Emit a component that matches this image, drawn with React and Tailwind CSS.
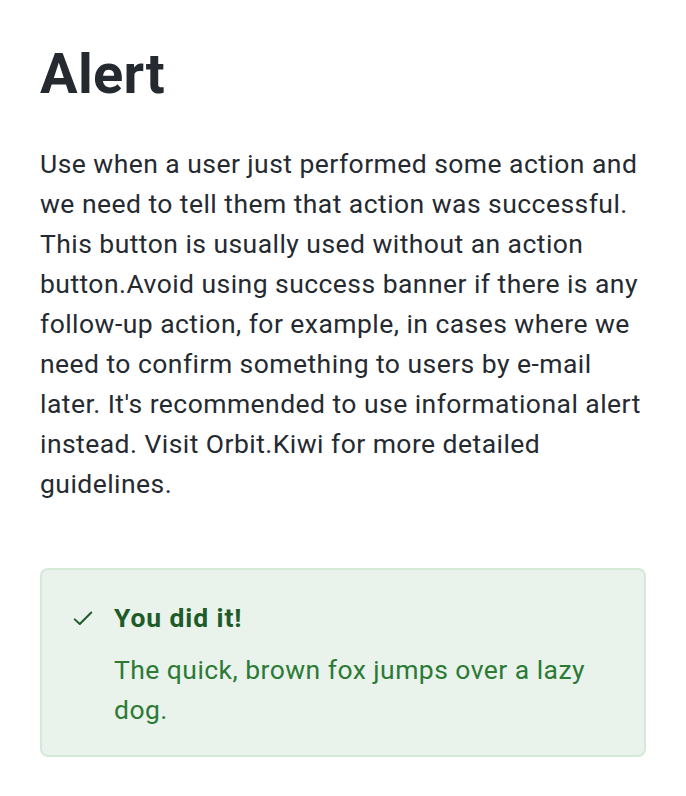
export default function App() {
  return (
    <main className="min-h-screen bg-white px-10 pt-[38px] text-[#252a31] font-['Roboto',sans-serif]">
      <h1 className="text-[56px] font-bold leading-[72px] tracking-[0.3px]">Alert</h1>

      <p className="mt-[34px] text-[26.5px] leading-[40px] tracking-[0.45px]">
        Use when a user just performed some action and we need to tell them that action was
        successful. This button is usually used without an action button.Avoid using success
        banner if there is any follow-up action, for example, in cases where we need to confirm
        something to users by e-mail later. It's recommended to use informational alert instead.
        Visit Orbit.Kiwi for more detailed guidelines.
      </p>

      <div className="mt-[64px] flex gap-[20px] rounded-[8px] border-2 border-[#d5e9d7] bg-[#e9f3ec] pl-[30px] pr-[30px] pt-[28px] pb-[25px]">
        <svg
          className="mt-[9px] h-[22px] w-[22px] shrink-0"
          viewBox="0 0 24 24"
          fill="none"
          stroke="#1f5b28"
          strokeWidth="2.2"
          strokeLinecap="round"
          strokeLinejoin="round"
        >
          <path d="M3 13.5l5.5 5L21 6" />
        </svg>
        <div className="flex flex-col gap-[12px]">
          <div className="text-[26.5px] font-bold leading-[40px] tracking-[0.9px] text-[#1f5b28]">You did it!</div>
          <div className="text-[26.5px] leading-[40px] tracking-[0.45px] text-[#2b7a36]">
            The quick, brown fox jumps over a lazy dog.
          </div>
        </div>
      </div>
    </main>
  );
}
